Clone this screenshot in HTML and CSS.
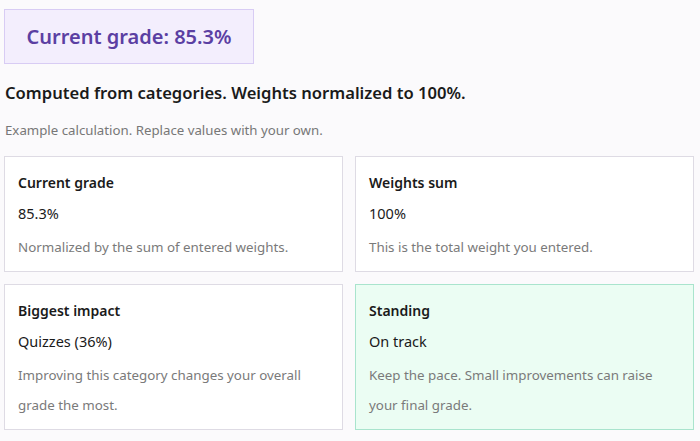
FILE: index.html
```html
<!DOCTYPE html>
<html lang="en">
<head>
    <meta charset="UTF-8">
    <meta name="viewport" content="width=device-width, initial-scale=1.0">
    <title>Grade Summary</title>
    <link rel="stylesheet" href="styles.css">
</head>
<body>
    <div class="page">
        <div class="grade-badge">Current grade: 85.3%</div>
        <h2 class="summary">Computed from categories. Weights normalized to 100%.</h2>
        <p class="note">Example calculation. Replace values with your own.</p>

        <!-- Result cards -->
        <div class="cards">
            <div class="card">
                <h3>Current grade</h3>
                <p class="value">85.3%</p>
                <p class="desc">Normalized by the sum of entered weights.</p>
            </div>
            <div class="card">
                <h3>Weights sum</h3>
                <p class="value">100%</p>
                <p class="desc">This is the total weight you entered.</p>
            </div>
            <div class="card">
                <h3>Biggest impact</h3>
                <p class="value">Quizzes (36%)</p>
                <p class="desc">Improving this category changes your overall grade the most.</p>
            </div>
            <div class="card good">
                <h3>Standing</h3>
                <p class="value">On track</p>
                <p class="desc">Keep the pace. Small improvements can raise your final grade.</p>
            </div>
        </div>
    </div>
</body>
</html>
```
FILE: styles.css
```css
body {
    font-family: "Noto Sans", "Open Sans", sans-serif;
    background-color: #fbfafc;
    color: #1a1a1a;
    margin: 0;
}
.page {
    padding: 9px 6px 0 4px;
}
.grade-badge {
    display: inline-block;
    width: 250px;
    height: 55px;
    box-sizing: border-box;
    line-height: 53px;
    text-align: center;
    background-color: #f3eefd;
    border: 1px solid #d8ccf4;
    color: #5b3fa3;
    font-size: 20px;
    font-weight: 600;
}
.summary {
    font-size: 16.6px;
    font-weight: 600;
    margin: 17px 0 0 1px;
    line-height: 24px;
}
.note {
    font-size: 13.25px;
    color: #777;
    margin: 15px 0 0 1px;
    line-height: 20px;
}
.cards {
    display: grid;
    grid-template-columns: 1fr 1fr;
    gap: 12px;
    margin-top: 16px;
}
.card {
    background-color: #fff;
    border: 1px solid #dedbe4;
    padding: 12px 24px 9px 13px;
}
.card.good {
    background-color: #ebfdf3;
    border-color: #a9e4cd;
}
.card h3 {
    margin: 0;
    font-size: 14px;
    font-weight: 600;
    line-height: 28px;
}
.card .value {
    margin: 4px 0 0;
    font-size: 14.5px;
    line-height: 24px;
}
.card .desc {
    margin: 7px 0 0;
    font-size: 13.35px;
    line-height: 30px;
    color: #7a7a7a;
}
```
